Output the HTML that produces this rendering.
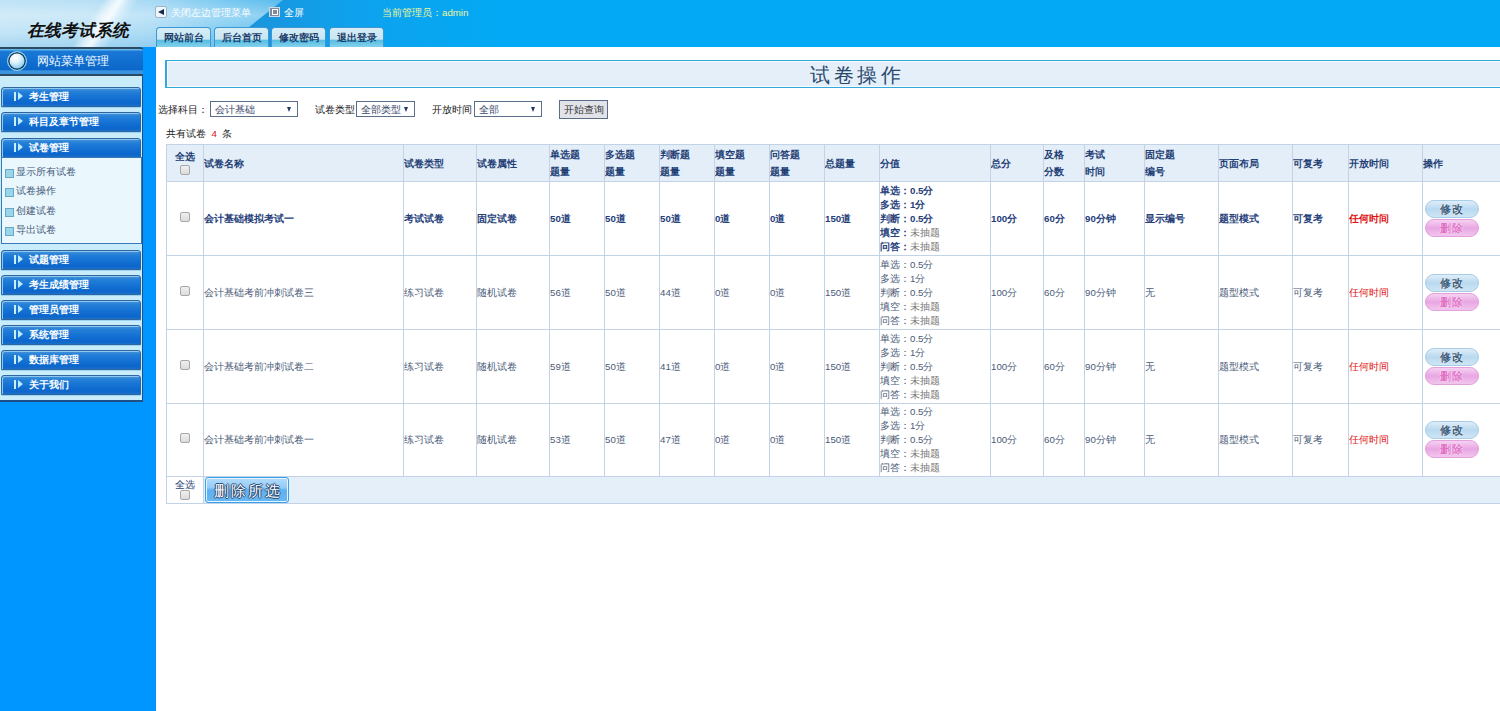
<!DOCTYPE html>
<html><head><meta charset="utf-8">
<style>
*{box-sizing:border-box}
html,body{margin:0;padding:0;width:1500px;height:711px;overflow:hidden;background:#fff;font-family:"Liberation Sans",sans-serif}
.abs{position:absolute}
#hdr{left:0;top:0;width:1500px;height:47px;background:#03a9f4;overflow:hidden}
#hdrD{left:180px;top:0;width:320px;height:47px;background:linear-gradient(90deg,#0f86d2 0%,#1996de 25%,#0ea2ee 55%,#03a9f4 100%)}
#hdrL{left:0;top:0;width:290px;height:47px;clip-path:polygon(0 0,283px 0,224px 47px,0 47px);background:linear-gradient(90deg,#bfe3f6 0%,#b8e0f5 30%,#a4d8f4 55%,#7ccaf1 75%,#54b9ec 100%)}
#hdrV{left:0;top:0;width:290px;height:47px;clip-path:polygon(0 0,283px 0,224px 47px,0 47px);background:linear-gradient(180deg,rgba(255,255,255,0) 0%,rgba(255,255,255,.3) 32%,rgba(255,255,255,.05) 70%,rgba(0,120,210,.12) 100%)}
#streak{left:-8px;top:0;width:160px;height:47px;background:linear-gradient(124deg,rgba(255,255,255,0) 58%,rgba(255,255,255,.55) 63%,rgba(255,255,255,.85) 67%,rgba(255,255,255,.3) 72%,rgba(255,255,255,0) 77%)}
#logo{left:27px;top:20px;font-size:16.8px;font-style:italic;font-weight:bold;color:#111;letter-spacing:0px;font-family:"Liberation Serif",serif;line-height:22px}
.ttxt{font-size:9.7px;color:#fbfdff;line-height:12px}
.tab{top:27px;width:55px;height:20px;border:1px solid #3b98d2;border-bottom:none;border-radius:4px 4px 0 0;background:linear-gradient(180deg,#d6edf7 0%,#c9e6f2 58%,#58bde2 66%,#84d2ec 100%);font-size:9.7px;font-weight:bold;color:#1d3d6a;text-align:center;line-height:19px}
#side{left:0;top:47px;width:156px;height:664px;background:#0096ff}
#panel{left:0;top:48px;width:143px;height:354px;background:#c8ecf9;border-right:1px solid #1f4f86;border-bottom:2px solid #1f4f86}
#ph{left:0;top:47px;width:143px;height:29px;border-top:2px solid #2c4a62;border-bottom:2px solid #2c4a62;border-radius:0 3px 0 0;background:linear-gradient(180deg,#64b6ea 0px,#64b6ea 1px,#1a78d6 2px,#106ed0 50%,#0c68c8 82%,#3c94de 88%,#3c94de 100%)}
#circle{left:7px;top:51px;width:20px;height:20px;border-radius:50%;border:1.5px solid #8ad6f6;box-shadow:inset 0 0 0 1.5px #1c3f5e;background:radial-gradient(circle at 40% 30%,#ffffff 0%,#e4f4fc 30%,#8ed0f2 65%,#3aa6e6 100%)}
#phT{left:37px;top:53px;font-size:12.3px;color:#f4fbff;line-height:16px}
.mi{left:1px;width:140px;height:20px;border:1px solid #2f66a0;border-radius:3px 3px 0 0;background:linear-gradient(180deg,#4a94d8 0%,#2580d8 20%,#1672d4 50%,#0c66cc 85%,#1a70c8 100%);box-shadow:inset 1px 1px 0 #8cc8f0,0 1px 0 #9ad4f2}
.mi span{position:absolute;left:27px;top:2px;font-size:9.6px;font-weight:bold;color:#fff;line-height:14px}
.mi i{position:absolute;left:12px;top:4px;width:2px;height:9px;background:#c8f0fa}
.mi b{position:absolute;left:16px;top:4px;width:0;height:0;border-top:4.5px solid transparent;border-bottom:4.5px solid transparent;border-left:5px solid #bfeaf8}
#sub{left:1px;top:157px;width:141px;height:87px;background:#eaf7fd;border:1px solid #3a78b8}
.si{left:5px;font-size:9.5px;color:#46597a;line-height:12px}
.si:before{content:"";position:absolute;left:0;top:3px;width:7px;height:7px;background:#9ad6ea;border:1px solid #6aa6c8}
.si span{position:absolute;left:11px;top:0;white-space:nowrap}
#content{left:155px;top:47px;width:1345px;height:664px;background:#fff}
#title{left:165px;top:60px;width:1400px;height:28px;background:#e4eff9;border:1px solid #34a8d8;border-left-width:2px;box-shadow:inset 1px 1px 0 #f6fbff,inset 0 -1px 0 #f6fbff}
#titleT{left:810px;top:64px;font-size:19.5px;color:#2a496f;letter-spacing:3.5px;line-height:22px}
.lbl{font-size:9.7px;color:#222;line-height:12px;white-space:nowrap}
.sel{height:16px;border:1px solid #5a6e8c;background:#fff;font-size:9.7px;color:#3a4a6a;line-height:15px;padding-left:4px}
.sel:after{content:"";position:absolute;right:6px;top:5px;border-left:2.5px solid transparent;border-right:2.5px solid transparent;border-top:5px solid #1f3a66}
#btn{left:559px;top:100px;width:49px;height:19px;border:1px solid #5a6e8c;background:#e1e3e8;font-size:9.7px;color:#333;text-align:center;line-height:17px}
table{position:absolute;left:166px;top:143.5px;width:1376px;border-collapse:collapse;table-layout:fixed;font-size:9.7px}
td,th{border:1px solid #c2d3e6;padding:2px 0 0 0;vertical-align:middle;text-align:left;line-height:14.5px;overflow:hidden;white-space:nowrap}
th{background:#e3eef9;color:#1f3f75;font-weight:bold;height:37px;line-height:17px;padding-top:1px}
tr.r td{height:auto;line-height:14.2px;color:#4a5a78}
tr.b td{color:#25407a;font-weight:bold}
.red{color:#e01010!important}
.gray{color:#777}
.cb{display:inline-block;width:10px;height:10px;border:1px solid #a8a8a8;border-radius:2px;background:linear-gradient(#f0f0f0,#dcdcdc)}
.op{display:block;width:54px;height:18px;border-radius:9px;margin-left:2px;text-align:center;font-size:11px;font-weight:bold;line-height:17px;letter-spacing:1px}
.op1{background:linear-gradient(180deg,#dfeefa 0%,#b9d9ef 50%,#cfe6f6 100%);border:1px solid #a9cde6;color:#3f5f80;margin-top:-2px;text-shadow:0 0 1px #fff,0 0 1px #fff}
.op2{background:linear-gradient(180deg,#f6d2f2 0%,#e8a6e2 50%,#f2c6ee 100%);border:1px solid #e2a0dc;color:#e070c8;margin-top:1px;text-shadow:0 0 1px #fff,0 0 1px #fff}
tr.l td{padding-top:1px}
tr.f td{height:27px;background:#e4eff9}
#del{position:absolute;left:205px;top:477px;width:84px;height:26px;border:1px solid #3aa0ea;border-radius:3px;box-shadow:inset 0 0 0 1px #e6f4ff;background:linear-gradient(180deg,#b4dcfa 0%,#94ccf6 40%,#5eb0f0 50%,#6ab8f2 100%);font-size:15px;color:#fff;text-align:center;line-height:25px;letter-spacing:2px;padding-left:2px;text-shadow:1px 0 0 #25456e,-1px 0 0 #25456e,0 1px 0 #25456e,0 -1px 0 #25456e}
</style></head><body>
<div id="hdr" class="abs">
  <div id="hdrD" class="abs"></div>
  <div id="hdrL" class="abs"></div>
  <div id="hdrV" class="abs"></div>
  <div id="streak" class="abs"></div>
</div>
<div id="logo" class="abs">在线考试系统</div>
<div class="abs" style="left:155px;top:6px;width:12px;height:12px;background:#eef6fb;border:1px solid #9ab6c8;border-radius:2px"></div>
<div class="abs" style="left:158px;top:9px;width:0;height:0;border-top:3px solid transparent;border-bottom:3px solid transparent;border-right:6px solid #1a2a4a"></div>
<div class="abs ttxt" style="left:171px;top:7px">关闭左边管理菜单</div>
<div class="abs" style="left:269px;top:7px;width:11px;height:10px;background:#7d8c9c;border:1px solid #d0dae4"></div><div class="abs" style="left:272px;top:9px;width:6px;height:6px;border:1px solid #fff"></div>
<div class="abs ttxt" style="left:284px;top:7px;color:#fff">全屏</div>
<div class="abs ttxt" style="left:382px;top:7px;color:#eef59a">当前管理员：admin</div>
<div class="abs tab" style="left:156px">网站前台</div>
<div class="abs tab" style="left:214px">后台首页</div>
<div class="abs tab" style="left:271px">修改密码</div>
<div class="abs tab" style="left:329px">退出登录</div>

<div id="side" class="abs"></div>
<div id="panel" class="abs"></div>
<div id="ph" class="abs"></div>
<div id="circle" class="abs"></div>
<div id="phT" class="abs">网站菜单管理</div>
<div class="abs mi" style="top:87px"><i></i><b></b><span>考生管理</span></div>
<div class="abs mi" style="top:112px"><i></i><b></b><span>科目及章节管理</span></div>
<div class="abs mi" style="top:138px"><i></i><b></b><span>试卷管理</span></div>
<div id="sub" class="abs"></div>
<div class="abs si" style="top:166px"><span>显示所有试卷</span></div>
<div class="abs si" style="top:185px"><span>试卷操作</span></div>
<div class="abs si" style="top:205px"><span>创建试卷</span></div>
<div class="abs si" style="top:224px"><span>导出试卷</span></div>
<div class="abs mi" style="top:250px"><i></i><b></b><span>试题管理</span></div>
<div class="abs mi" style="top:275px"><i></i><b></b><span>考生成绩管理</span></div>
<div class="abs mi" style="top:300px"><i></i><b></b><span>管理员管理</span></div>
<div class="abs mi" style="top:325px"><i></i><b></b><span>系统管理</span></div>
<div class="abs mi" style="top:350px"><i></i><b></b><span>数据库管理</span></div>
<div class="abs mi" style="top:375px"><i></i><b></b><span>关于我们</span></div>

<div id="title" class="abs"></div>
<div id="titleT" class="abs">试卷操作</div>

<div class="abs lbl" style="left:158px;top:104px">选择科目：</div>
<div class="abs sel" style="left:210px;top:101px;width:88px">会计基础</div>
<div class="abs lbl" style="left:315px;top:104px">试卷类型</div>
<div class="abs sel" style="left:356px;top:101px;width:59px">全部类型</div>
<div class="abs lbl" style="left:432px;top:104px">开放时间</div>
<div class="abs sel" style="left:474px;top:101px;width:68px">全部</div>
<div id="btn" class="abs">开始查询</div>
<div class="abs lbl" style="left:166px;top:128px">共有试卷 &nbsp;<span style="color:#e01020">4</span> &nbsp;条</div>

<table>
<colgroup>
<col style="width:37px"><col style="width:200px"><col style="width:73px"><col style="width:73px"><col style="width:55px"><col style="width:55px"><col style="width:55px"><col style="width:55px"><col style="width:55px"><col style="width:55px"><col style="width:111px"><col style="width:53px"><col style="width:41px"><col style="width:60px"><col style="width:74px"><col style="width:74px"><col style="width:56px"><col style="width:74px"><col style="width:120px">
</colgroup>
<tr><th style="text-align:center;line-height:13px;padding-top:3px;color:#1d3c72">全选<br><span class="cb" style="margin-top:2px"></span></th><th>试卷名称</th><th>试卷类型</th><th>试卷属性</th><th>单选题<br>题量</th><th>多选题<br>题量</th><th>判断题<br>题量</th><th>填空题<br>题量</th><th>问答题<br>题量</th><th>总题量</th><th>分值</th><th>总分</th><th>及格<br>分数</th><th>考试<br>时间</th><th>固定题<br>编号</th><th>页面布局</th><th>可复考</th><th>开放时间</th><th>操作</th></tr>
<tr class="r b" style="height:74px"><td style="text-align:center"><span class="cb"></span></td><td>会计基础模拟考试一</td><td>考试试卷</td><td>固定试卷</td><td>50道</td><td>50道</td><td>50道</td><td>0道</td><td>0道</td><td>150道</td><td>单选：0.5分<br>多选：1分<br>判断：0.5分<br>填空：<span class="gray" style="font-weight:normal">未抽题</span><br>问答：<span class="gray" style="font-weight:normal">未抽题</span></td><td>100分</td><td>60分</td><td>90分钟</td><td>显示编号</td><td>题型模式</td><td>可复考</td><td class="red">任何时间</td><td><span class="op op1">修改</span><span class="op op2">删除</span></td></tr>
<tr class="r" style="height:74px"><td style="text-align:center"><span class="cb"></span></td><td>会计基础考前冲刺试卷三</td><td>练习试卷</td><td>随机试卷</td><td>56道</td><td>50道</td><td>44道</td><td>0道</td><td>0道</td><td>150道</td><td>单选：0.5分<br>多选：1分<br>判断：0.5分<br>填空：<span class="gray">未抽题</span><br>问答：<span class="gray">未抽题</span></td><td>100分</td><td>60分</td><td>90分钟</td><td class="gray">无</td><td>题型模式</td><td>可复考</td><td class="red">任何时间</td><td><span class="op op1">修改</span><span class="op op2">删除</span></td></tr>
<tr class="r" style="height:74px"><td style="text-align:center"><span class="cb"></span></td><td>会计基础考前冲刺试卷二</td><td>练习试卷</td><td>随机试卷</td><td>59道</td><td>50道</td><td>41道</td><td>0道</td><td>0道</td><td>150道</td><td>单选：0.5分<br>多选：1分<br>判断：0.5分<br>填空：<span class="gray">未抽题</span><br>问答：<span class="gray">未抽题</span></td><td>100分</td><td>60分</td><td>90分钟</td><td class="gray">无</td><td>题型模式</td><td>可复考</td><td class="red">任何时间</td><td><span class="op op1">修改</span><span class="op op2">删除</span></td></tr>
<tr class="r l" style="height:73px"><td style="text-align:center"><span class="cb"></span></td><td>会计基础考前冲刺试卷一</td><td>练习试卷</td><td>随机试卷</td><td>53道</td><td>50道</td><td>47道</td><td>0道</td><td>0道</td><td>150道</td><td>单选：0.5分<br>多选：1分<br>判断：0.5分<br>填空：<span class="gray">未抽题</span><br>问答：<span class="gray">未抽题</span></td><td>100分</td><td>60分</td><td>90分钟</td><td class="gray">无</td><td>题型模式</td><td>可复考</td><td class="red">任何时间</td><td><span class="op op1">修改</span><span class="op op2">删除</span></td></tr>
<tr class="f"><td style="background:#fff;text-align:center;line-height:11px;color:#1f3f75">全选<br><span class="cb"></span></td><td colspan="18"></td></tr>
</table>
<div id="del">删除所选</div>
</body></html>
